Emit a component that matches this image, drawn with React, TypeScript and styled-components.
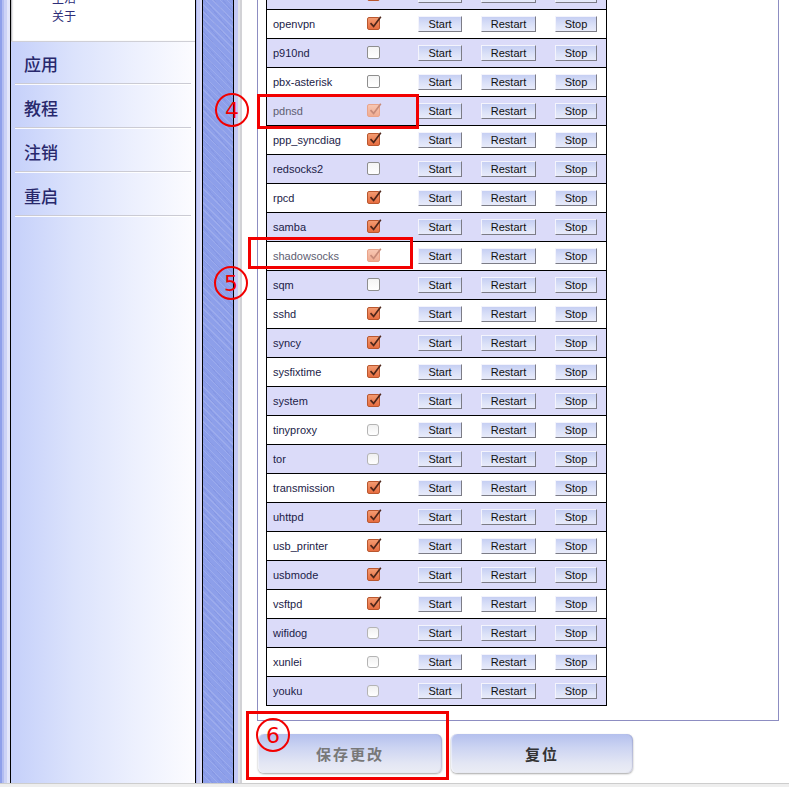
import React from 'react';
import styled, { createGlobalStyle } from 'styled-components';

type BoxState = 'on' | 'off' | 'dim' | 'soft';
type Service = { name: string; box: BoxState; muted?: boolean };

// first row sits above the scroll edge, only its bottom strip shows
const services: Service[] = [
  { name: '', box: 'on' },
  { name: 'openvpn', box: 'on' },
  { name: 'p910nd', box: 'off' },
  { name: 'pbx-asterisk', box: 'off' },
  { name: 'pdnsd', box: 'dim', muted: true },
  { name: 'ppp_syncdiag', box: 'on' },
  { name: 'redsocks2', box: 'off' },
  { name: 'rpcd', box: 'on' },
  { name: 'samba', box: 'on' },
  { name: 'shadowsocks', box: 'dim', muted: true },
  { name: 'sqm', box: 'off' },
  { name: 'sshd', box: 'on' },
  { name: 'syncy', box: 'on' },
  { name: 'sysfixtime', box: 'on' },
  { name: 'system', box: 'on' },
  { name: 'tinyproxy', box: 'soft' },
  { name: 'tor', box: 'soft' },
  { name: 'transmission', box: 'on' },
  { name: 'uhttpd', box: 'on' },
  { name: 'usb_printer', box: 'on' },
  { name: 'usbmode', box: 'on' },
  { name: 'vsftpd', box: 'on' },
  { name: 'wifidog', box: 'soft' },
  { name: 'xunlei', box: 'soft' },
  { name: 'youku', box: 'soft' },
];

const menu = ['应用', '教程', '注销', '重启'];
const subMenu = ['生活', '关于'];

const GlobalStyle = createGlobalStyle`
  html, body { margin: 0; padding: 0; background: #fff; }
  body { font-family: "Liberation Sans", Arial, sans-serif; }
  * { box-sizing: border-box; }
`;

const Frame = styled.div`
  position: relative;
  width: 789px;
  height: 787px;
  overflow: hidden;
  display: flex;
  flex-direction: column;
`;

const Main = styled.div`
  display: flex;
  height: 783px;
`;

const StatusBar = styled.div`
  height: 4px;
  border-top: 1px solid #cdcdcd;
  background: #eeeeee;
`;

const blueTexture = `
  repeating-linear-gradient(45deg, rgba(255,255,255,0.13) 0 1px, transparent 1px 5px),
  repeating-linear-gradient(50deg, rgba(60,70,170,0.08) 0 1px, transparent 1px 7px),
  #8d9fea
`;

const LeftEdge = styled.div`
  width: 11px;
  flex: none;
  border-right: 1px solid #000;
  background: linear-gradient(to right, #8fa0ea 0 2px, #b3bdf1 2px 4px, #cdd3f6 4px 7px, #e4e7fb 7px 10px);
`;

const Sidebar = styled.div`
  width: 184px;
  flex: none;
  background: linear-gradient(to right, #c5d0fa 0%, #dce3fc 35%, #eef1fe 70%, #fcfcff 100%);
`;

const SubMenu = styled.div`
  margin-top: -11px;
  padding: 0 0 16px 41px;
  background: #fff;
  border-bottom: 1px solid #cfcfd6;
  box-shadow: inset 2px 0 2px -1px #a9a9b0;
`;

const SubItem = styled.div`
  font: 12px/18px "Noto Sans CJK SC", sans-serif;
  color: #2e2e78;
`;

const Menu = styled.div`
  margin-top: -2px;
  padding: 0 4px;
`;

const MenuItem = styled.div`
  height: 44px;
  padding: 4px 0 0 9px;
  display: flex;
  align-items: center;
  border-bottom: 1px solid #cbcbd4;
  box-shadow: 0 1px 0 rgba(255, 255, 255, 0.9);
  font: 500 17px "Noto Sans CJK SC", sans-serif;
  color: #28286c;
`;

const Rail = styled.div`
  display: flex;
  flex: none;
  border-left: 1px solid #000;
`;

const RailBevel = styled.div`
  width: 7px;
  border-right: 1px solid #000;
  background: linear-gradient(to right, #a9b3ee 0 1px, #c9cef6 1px 4px, #dadcfa 4px 6px);
`;

const RailTexture = styled.div`
  width: 31px;
  border-right: 1px solid #000;
  background: ${blueTexture};
`;

const RailEdge = styled.div`
  width: 8px;
  background: linear-gradient(to right, #c4c9f4 0 4px, #e3e3e6 4px 6px, #d2d2d6 6px 8px);
`;

const Content = styled.div`
  flex: 1;
  overflow: hidden;
  background: #fff;
  padding: 0 10px 0 15px;
`;

const Scroll = styled.div`
  margin-top: -31px;
`;

const Panel = styled.div`
  width: 522px;
  border: 1px solid #8d8dc2;
  padding: 10px 8px 14px;
`;

const Table = styled.div`
  width: 341px;
  border: 1px solid #000;
  border-bottom: none;
`;

const Row = styled.div<{ $alt: boolean }>`
  display: grid;
  grid-template-columns: 100px 51px 63px 74px 1fr;
  align-items: center;
  height: 29px;
  border-bottom: 1px solid #000;
  background: ${(p) => (p.$alt ? '#dbdbf9' : '#fff')};
`;

const Name = styled.span<{ $muted?: boolean }>`
  padding-left: 6px;
  font-size: 11px;
  color: ${(p) => (p.$muted ? '#5e5e72' : '#1c1c48')};
`;

const boxLook: Record<BoxState, string> = {
  on: 'border-color: #b9572f; background: linear-gradient(#f39a70, #e76d40);',
  dim: 'border-color: #eaa48a; background: linear-gradient(#f7c6b2, #f0ac92);',
  off: 'border-color: #8e8e8e; background: linear-gradient(#f4f4f4, #ffffff);',
  soft: 'border-color: #b4b4b4; background: linear-gradient(#f0f0f0, #ffffff); border-radius: 3px; width: 12px; height: 12px;',
};

const CheckBox = styled.span<{ $state: BoxState }>`
  position: relative;
  display: block;
  width: 13px;
  height: 13px;
  margin-top: -1px;
  border: 1px solid;
  border-radius: 2px;
  ${(p) => boxLook[p.$state]}

  svg {
    position: absolute;
    left: 0;
    top: -3px;
  }
`;

const SmallButton = styled.button<{ $w: number }>`
  width: ${(p) => p.$w}px;
  height: 16px;
  padding: 0;
  border: 1px solid;
  border-color: #f4f4fc #7c7c86 #7c7c86 #f4f4fc;
  background: linear-gradient(#c6cff3, #dce2f8 60%, #e8ebfa);
  font: 11px/13px "Liberation Sans", Arial, sans-serif;
  color: #111;
`;

const ButtonBar = styled.div`
  display: flex;
  gap: 9px;
  margin-top: 13px;
  padding-left: 1px;
`;

const BigButton = styled.button<{ $w: number; $dim?: boolean }>`
  width: ${(p) => p.$w}px;
  height: 39px;
  border: none;
  border-radius: 6px;
  background: linear-gradient(#b4c0ee 0%, #ccd4f2 35%, #e3e6f4 75%, #ebedf5 100%);
  box-shadow: 0 1px 2px rgba(0, 0, 0, 0.35), inset 1px 0 1px rgba(255, 255, 255, 0.5), inset -1px 0 1px rgba(90, 90, 140, 0.25);
  font: bold 15px "Noto Sans CJK SC", sans-serif;
  letter-spacing: 2px;
  color: ${(p) => (p.$dim ? '#787878' : '#333')};
`;

const Ring = styled.div<{ $x: number; $y: number }>`
  position: absolute;
  left: ${(p) => p.$x}px;
  top: ${(p) => p.$y}px;
  width: 34px;
  height: 34px;
  border: 2px solid #f20000;
  border-radius: 50%;
  display: flex;
  align-items: center;
  justify-content: center;
  font: 22px "DejaVu Sans", sans-serif;
  color: #f20000;
`;

const Mark = styled.div<{ $x: number; $y: number; $w: number; $h: number }>`
  position: absolute;
  left: ${(p) => p.$x}px;
  top: ${(p) => p.$y}px;
  width: ${(p) => p.$w}px;
  height: ${(p) => p.$h}px;
  border: 3px solid #f20000;
`;

function Check({ state }: { state: BoxState }) {
  const tick = state === 'on' || state === 'dim';
  return (
    <CheckBox $state={state}>
      {tick && (
        <svg width="15" height="15" viewBox="0 0 15 15">
          <path
            d="M2.5 8.2 L5.6 11.4 L12.8 1.8"
            fill="none"
            stroke={state === 'on' ? '#4e261a' : '#c78a78'}
            strokeWidth="1.7"
          />
        </svg>
      )}
    </CheckBox>
  );
}

export default function App() {
  return (
    <Frame>
      <GlobalStyle />
      <Main>
        <LeftEdge />
        <Sidebar>
          <SubMenu>
            {subMenu.map((s) => (
              <SubItem key={s}>{s}</SubItem>
            ))}
          </SubMenu>
          <Menu>
            {menu.map((m) => (
              <MenuItem key={m}>{m}</MenuItem>
            ))}
          </Menu>
        </Sidebar>
        <Rail>
          <RailBevel />
          <RailTexture />
          <RailEdge />
        </Rail>
        <Content>
          <Scroll>
            <Panel>
              <Table>
                {services.map((s, i) => {
                  const hidden = !s.name;
                  return (
                    <Row key={s.name || 'above'} $alt={i % 2 === 0}>
                      <Name $muted={s.muted}>{s.name}</Name>
                      <Check state={s.box} />
                      <SmallButton $w={44}>{hidden ? '' : 'Start'}</SmallButton>
                      <SmallButton $w={55}>{hidden ? '' : 'Restart'}</SmallButton>
                      <SmallButton $w={42}>{hidden ? '' : 'Stop'}</SmallButton>
                    </Row>
                  );
                })}
              </Table>
            </Panel>
            <ButtonBar>
              <BigButton $w={184} $dim>保存更改</BigButton>
              <BigButton $w={182}>复位</BigButton>
            </ButtonBar>
          </Scroll>
        </Content>
      </Main>
      <StatusBar />

      <Mark $x={257} $y={94} $w={162} $h={35} />
      <Ring $x={215} $y={93}>4</Ring>
      <Mark $x={248} $y={237} $w={165} $h={32} />
      <Ring $x={214} $y={266}>5</Ring>
      <Mark $x={246} $y={711} $w={203} $h={69} />
      <Ring $x={256} $y={718}>6</Ring>
    </Frame>
  );
}
